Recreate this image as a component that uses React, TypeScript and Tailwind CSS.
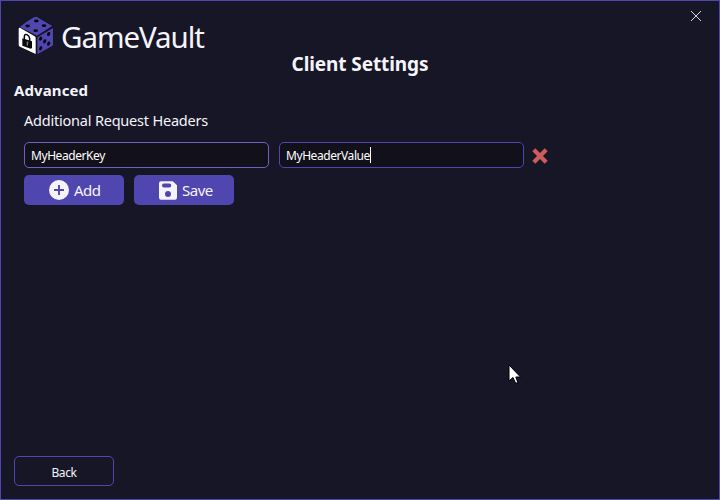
import type { ReactNode } from "react";

const dots: [number, number, number, number, number][] = [
  [73, 33, 7, 4.2, 0], [47, 48, 7, 4.2, 0], [96, 47, 7, 4.2, 0], [71, 62, 7, 4.2, 0],
  [110, 72, 4.5, 6.5, 25], [86, 86, 4.5, 6.5, 25], [98, 94, 4.5, 6.5, 25], [110, 101, 4.5, 6.5, 25], [86, 115, 4.5, 6.5, 25],
];

function DiceLogo() {
  return (
    <svg className="h-[50px] w-[50px] shrink-0" viewBox="0 0 150 150">
      <path d="M73 20 L121 47 Q124 49 124 53 V103 Q124 106 121 108 L76 133 H71 L23 111 Q20 109 20 106 V55 Q20 51 23 49 Z" fill="#12101c" />
      <path d="M73 20 L121 48 L75 77 L23 51 Q46 33 66 22 Q70 20 73 20 Z" fill="#5046b0" />
      <path d="M76 82 L123 54 V102 Q123 106 120 108 L76 133 Z" fill="#5046b0" />
      <path d="M25 54 L68 79 Q71 81 71 84 V132 L24 110 Q20 108 20 104 V57 Q20 52 25 54 Z" fill="#ffffff" />
      {dots.map(([x, y, rx, ry, r]) => (
        <ellipse key={`${x}-${y}`} cx={x} cy={y} rx={rx} ry={ry} transform={`rotate(${r} ${x} ${y})`} fill="#08070d" />
      ))}
      <path d="M37 88 V79 Q38 71 45 74 Q52 77 53 85 V93" fill="none" stroke="#08070d" strokeWidth="4.5" />
      <path d="M31 85 L60 94 V114 L56 116 L31 107 Z" fill="#08070d" />
      <path d="M44 95 a3 3 0 0 1 4 5 V108 L44 106 Z" fill="#77757c" />
    </svg>
  );
}

function PlusIcon() {
  return (
    <svg className="h-5 w-5" viewBox="0 0 20 20">
      <circle cx="10" cy="10" r="10" fill="#f5f4fb" />
      <path d="M10 5v10M5 10h10" stroke="#5046b0" strokeWidth="1.9" />
    </svg>
  );
}

function SaveIcon() {
  return (
    <svg className="mt-px h-[19px] w-[18px]" viewBox="0 0 18 19">
      <path
        fillRule="evenodd"
        fill="#f5f4fb"
        d="M2 .3H13.8L18 4.3V16.5Q18 18.7 16 18.7H2Q0 18.7 0 16.5V2.3Q0 .3 2 .3ZM5 2.4Q3 2.4 3 4.4Q3 6.4 5 6.4H10.3Q12.3 6.4 12.3 4.4Q12.3 2.4 10.3 2.4ZM9 10.1A3 3 0 1 0 9 16.1A3 3 0 1 0 9 10.1Z"
      />
    </svg>
  );
}

function ActionButton({ icon, children }: { icon: ReactNode; children: ReactNode }) {
  return (
    <button className="flex h-[30px] w-[100px] items-center gap-[5px] rounded-[5px] bg-[#5046b0] pl-[25px] text-[15px] leading-[30px] tracking-[-0.5px] text-[#f5f4fb]">
      {icon}
      {children}
    </button>
  );
}

function Field({ children, className }: { children: ReactNode; className: string }) {
  return (
    <div className={`flex h-[26px] w-[245px] items-center rounded-[5px] border bg-[#11101b] pt-0.5 pl-1.5 text-xs leading-[22px] tracking-[-0.43px] text-white ${className}`}>
      {children}
    </div>
  );
}

export default function App() {
  return (
    <div className="relative flex h-[500px] w-[720px] flex-col overflow-hidden border border-[#5046b0] bg-[#171626] font-['Noto_Sans',sans-serif] text-[#f5f4fb]">
      <header className="flex h-[50px] justify-between pt-[9px] pl-[11px]">
        <div className="flex">
          <DiceLogo />
          <span className="-ml-px pt-[7px] text-[29.5px] leading-10 tracking-[-1.05px]">GameVault</span>
        </div>
        <svg className="mr-[17px] h-3 w-3" viewBox="0 0 12 12">
          <path d="M1 1L11 11M11 1L1 11" stroke="#dcdce0" strokeWidth="1" />
        </svg>
      </header>
      <h1 className="h-[29px] text-center text-[19px] leading-[26px] font-bold tracking-[-0.1px]">Client Settings</h1>
      <main className="flex flex-1 flex-col pl-[13px]">
        <h2 className="h-[30px] text-[15px] leading-5 font-bold tracking-[0.1px]">Advanced</h2>
        <div className="pl-2.5">
          <p className="h-8 text-[14.5px] leading-5 tracking-[-0.21px]">Additional Request Headers</p>
          <div className="flex items-center">
            <Field className="border-[#7160c0]">MyHeaderKey</Field>
            <Field className="ml-2.5 border-[#5046b0]">
              MyHeaderValue<span className="-mt-0.5 h-4 w-px bg-white" />
            </Field>
            <svg className="ml-2 h-4 w-4 translate-y-px" viewBox="0 0 16 16">
              <path d="M1.8 1.8L14.2 14.2M14.2 1.8L1.8 14.2" stroke="#cd5c5c" strokeWidth="4.2" />
            </svg>
          </div>
          <div className="mt-[7px] flex gap-2.5">
            <ActionButton icon={<PlusIcon />}>Add</ActionButton>
            <ActionButton icon={<SaveIcon />}>Save</ActionButton>
          </div>
        </div>
      </main>
      <button className="mb-[13px] ml-[13px] h-[30px] w-[100px] shrink-0 rounded-[5px] border border-[#5046b0] pt-[3px] text-xs leading-[25px] tracking-[-0.4px]">Back</button>
      <svg className="absolute top-[363px] left-[507px] h-5 w-[13px]" viewBox="0 0 13 20">
        <path d="M1 1V17L5 13.5L7.5 19H10L7.8 13H12.5Z" fill="#fff" stroke="#000" strokeWidth="1" />
      </svg>
    </div>
  );
}
